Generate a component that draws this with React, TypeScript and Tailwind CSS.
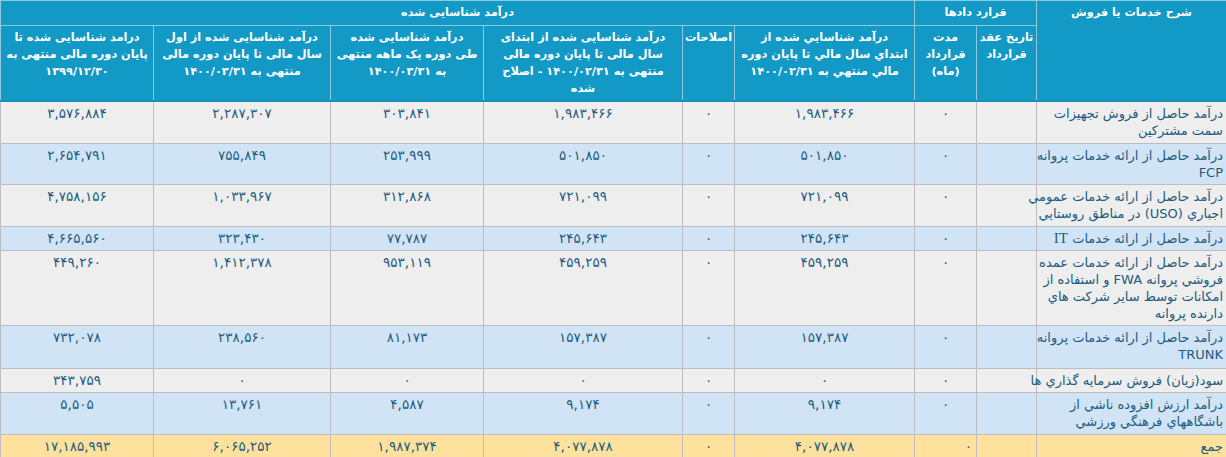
import React from "react";

type Row = {
  desc: React.ReactNode;
  dur: string;
  cols: string[];
  tone: "gray" | "blue";
  height: string;
};

const rows: Row[] = [
  {
    desc: (
      <>
        درآمد حاصل از فروش تجهیزات
        <br />
        سمت مشترکین
      </>
    ),
    dur: "۰",
    cols: ["۱,۹۸۳,۴۶۶", "۰", "۱,۹۸۳,۴۶۶", "۳۰۳,۸۴۱", "۲,۲۸۷,۳۰۷", "۳,۵۷۶,۸۸۴"],
    tone: "gray",
    height: "h-[42px]",
  },
  {
    desc: (
      <>
        درآمد حاصل از ارائه خدمات پروانه
        <br />
        FCP
      </>
    ),
    dur: "۰",
    cols: ["۵۰۱,۸۵۰", "۰", "۵۰۱,۸۵۰", "۲۵۳,۹۹۹", "۷۵۵,۸۴۹", "۲,۶۵۴,۷۹۱"],
    tone: "blue",
    height: "h-[41px]",
  },
  {
    desc: (
      <>
        درآمد حاصل از ارائه خدمات عمومي
        <br />
        اجباري (USO) در مناطق روستايي
      </>
    ),
    dur: "۰",
    cols: ["۷۲۱,۰۹۹", "۰", "۷۲۱,۰۹۹", "۳۱۲,۸۶۸", "۱,۰۳۳,۹۶۷", "۴,۷۵۸,۱۵۶"],
    tone: "gray",
    height: "h-[42px]",
  },
  {
    desc: (
      <>
        درآمد حاصل از ارائه خدمات{" "}
        <span className="font-['Liberation_Serif',serif] text-[15px]">IT</span>
      </>
    ),
    dur: "۰",
    cols: ["۲۴۵,۶۴۳", "۰", "۲۴۵,۶۴۳", "۷۷,۷۸۷", "۳۲۳,۴۳۰", "۴,۶۶۵,۵۶۰"],
    tone: "blue",
    height: "h-[24px]",
  },
  {
    desc: (
      <>
        درآمد حاصل از ارائه خدمات عمده
        <br />
        فروشي پروانه FWA و استفاده از
        <br />
        امکانات توسط ساير شرکت هاي
        <br />
        دارنده پروانه
      </>
    ),
    dur: "۰",
    cols: ["۴۵۹,۲۵۹", "۰", "۴۵۹,۲۵۹", "۹۵۳,۱۱۹", "۱,۴۱۲,۳۷۸", "۴۴۹,۲۶۰"],
    tone: "gray",
    height: "h-[75px]",
  },
  {
    desc: (
      <>
        درآمد حاصل از ارائه خدمات پروانه
        <br />
        TRUNK
      </>
    ),
    dur: "۰",
    cols: ["۱۵۷,۳۸۷", "۰", "۱۵۷,۳۸۷", "۸۱,۱۷۳", "۲۳۸,۵۶۰", "۷۳۲,۰۷۸"],
    tone: "blue",
    height: "h-[43px]",
  },
  {
    desc: <>سود(زيان) فروش سرمايه گذاري ها</>,
    dur: "۰",
    cols: ["۰", "۰", "۰", "۰", "۰", "۳۴۳,۷۵۹"],
    tone: "gray",
    height: "h-[23px]",
  },
  {
    desc: (
      <>
        درآمد ارزش افزوده ناشي از
        <br />
        باشگاههاي فرهنگي ورزشي
      </>
    ),
    dur: "۰",
    cols: ["۹,۱۷۴", "۰", "۹,۱۷۴", "۴,۵۸۷", "۱۳,۷۶۱", "۵,۵۰۵"],
    tone: "blue",
    height: "h-[42px]",
  },
];

const total = ["۴,۰۷۷,۸۷۸", "۰", "۴,۰۷۷,۸۷۸", "۱,۹۸۷,۳۷۴", "۶,۰۶۵,۲۵۲", "۱۷,۱۸۵,۹۹۳"];

const th =
  "border border-[#8fc9e0] bg-[#1399c6] px-[2px] py-[3px] align-top text-center font-bold text-white text-[11.3px] whitespace-nowrap";
const td = "border border-[#bdbdbd] px-[4px] py-[3px] align-top text-center text-[13.5px]";
const desc =
  "border border-[#bdbdbd] pl-[2px] pr-[3px] py-[3px] align-top text-right whitespace-nowrap text-[13px]";

export default function App() {
  return (
    <div className="w-[1226px] h-[457px] bg-white overflow-hidden">
      <table
        dir="rtl"
        className="w-[1226px] table-fixed border-collapse font-['DejaVu_Sans',sans-serif] leading-[17px] text-[#215b80]"
      >
        <colgroup>
          <col className="w-[190px]" />
          <col className="w-[60px]" />
          <col className="w-[62px]" />
          <col className="w-[180px]" />
          <col className="w-[52px]" />
          <col className="w-[199px]" />
          <col className="w-[153px]" />
          <col className="w-[177px]" />
          <col className="w-[153px]" />
        </colgroup>
        <thead>
          <tr className="h-[25px]">
            <th rowSpan={2} className={th}>
              شرح خدمات یا فروش
            </th>
            <th colSpan={2} className={th}>
              قرارد دادها
            </th>
            <th colSpan={6} className={th}>
              درآمد شناسایی شده
            </th>
          </tr>
          <tr className="h-[75px] border-b-2 border-b-[#1a8fbd]">
            <th className={th}>
              تاریخ عقد
              <br />
              قرارداد
            </th>
            <th className={th}>
              مدت
              <br />
              قرارداد
              <br />
              (ماه)
            </th>
            <th className={th}>
              درآمد شناسايي شده از
              <br />
              ابتداي سال مالي تا پايان دوره
              <br />
              مالي منتهي به ۱۴۰۰/۰۲/۳۱
            </th>
            <th className={th}>اصلاحات</th>
            <th className={th}>
              درآمد شناسایی شده از ابتدای
              <br />
              سال مالی تا پایان دوره مالی
              <br />
              منتهی به ۱۴۰۰/۰۲/۳۱ - اصلاح
              <br />
              شده
            </th>
            <th className={th}>
              درآمد شناسایی شده
              <br />
              طی دوره یک ماهه منتهی
              <br />
              به ۱۴۰۰/۰۳/۳۱
            </th>
            <th className={th}>
              درآمد شناسایی شده از اول
              <br />
              سال مالی تا پایان دوره مالی
              <br />
              منتهی به ۱۴۰۰/۰۳/۳۱
            </th>
            <th className={th}>
              درامد شناسایی شده تا
              <br />
              پایان دوره مالی منتهی به
              <br />
              ۱۳۹۹/۱۲/۳۰
            </th>
          </tr>
        </thead>
        <tbody>
          {rows.map((r, i) => (
            <tr
              key={i}
              className={`${r.height} ${r.tone === "gray" ? "bg-[#eeeeee]" : "bg-[#d1e4f5]"}`}
            >
              <td className={desc}>{r.desc}</td>
              <td className={td}></td>
              <td className={td}>{r.dur}</td>
              {r.cols.map((c, j) => (
                <td key={j} className={td}>
                  {c}
                </td>
              ))}
            </tr>
          ))}
          <tr className="h-[23px] bg-[#fde19d]">
            <td className={desc}>جمع</td>
            <td className={td}></td>
            <td className={`${td} text-right`}>۰</td>
            {total.map((c, j) => (
              <td key={j} className={td}>
                {c}
              </td>
            ))}
          </tr>
        </tbody>
      </table>
    </div>
  );
}
